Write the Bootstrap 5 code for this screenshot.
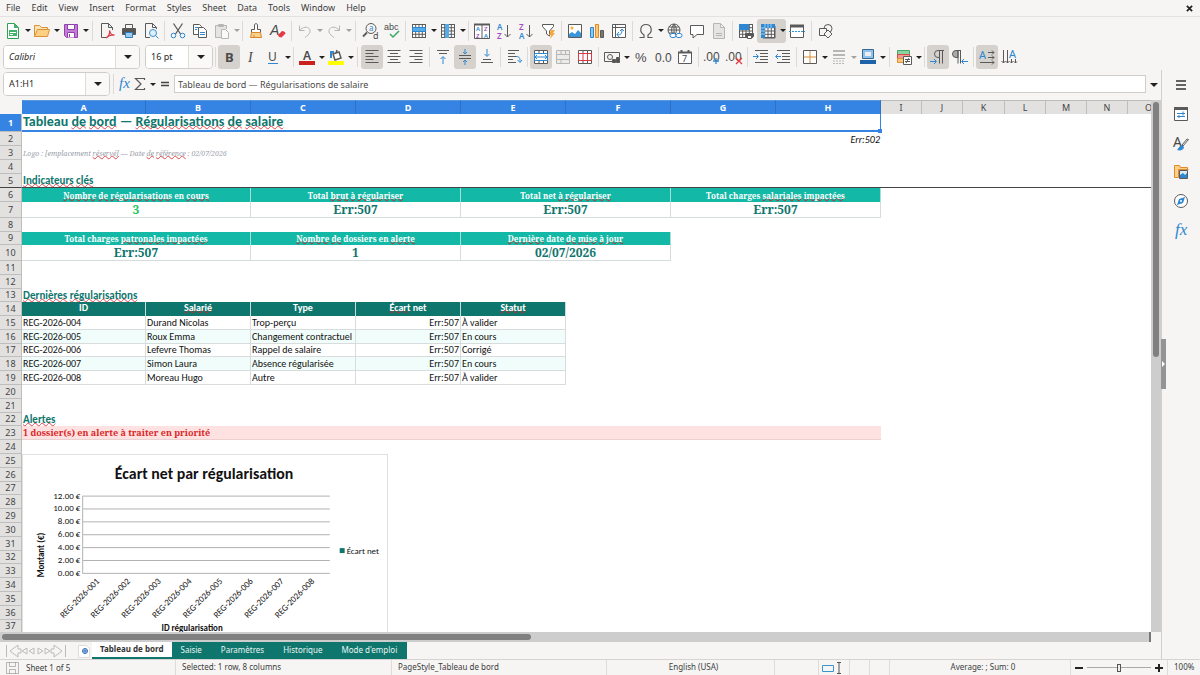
<!DOCTYPE html>
<html lang="fr">
<head>
<meta charset="utf-8">
<meta name="viewport" content="width=device-width, initial-scale=1">
<title>Tableau de bord — Régularisations de salaire</title>
<link href="https://cdn.jsdelivr.net/npm/bootstrap@5.3.0/dist/css/bootstrap.min.css" rel="stylesheet">
<style>
:root{--chrome:#f6f5f4;--line:#dcdad7;--ink:#3d3d3d;--teal:#0f766e;--mint:#14b8a6;--sel:#3584e4}
body{font-family:"Noto Sans",sans-serif;font-size:9px;line-height:16px;color:var(--ink);background:var(--chrome)}
button{font:inherit;color:inherit}
svg{display:block;flex:none}
.ic{width:16px;height:16px;fill:none;stroke:#5a5a5a;stroke-width:1;overflow:visible}
.ic text{stroke:none;fill:#4a4a4a}
.menubar{height:17px;padding-left:6px;border-bottom:1px solid #e4e2e0}
.menubar a{color:var(--ink);text-decoration:none;margin-right:11px}
.toolrow{height:27px;padding-left:2px}
.format-row{height:26px;padding-left:3px}
.tb{width:22px;height:24px;padding:0;border:0;background:none;border-radius:3px;display:flex;align-items:center;justify-content:center;flex:none}
.tb.on,.splitbtn.on{background:#d5d1cd}
.splitbtn{display:flex;border-radius:3px}
.dd{width:7px;height:24px;padding:0;border:0;background:none;display:flex;align-items:center;justify-content:center;flex:none}
.dd::before,.combo button::before,.expand::before{content:"";border:3px solid transparent;border-top:3px solid #222;border-bottom:0}
.off{opacity:.4}
.sep{width:5px;height:20px;flex:none;background:linear-gradient(var(--line),var(--line)) center/1px 100% no-repeat}
.sep-wide{width:7px}
.combo{height:24px;border:1px solid #cfccc9;border-radius:4px;background:#fff;overflow:hidden}
.combo input{border:0;padding:0 5px;min-width:0;flex:1;color:#2a2a2a;outline:0}
.combo button{width:24px;border:0;border-left:1px solid #dedbd8;background:#faf9f8;padding:0;display:flex;align-items:center;justify-content:center}
.combo button::before,.expand::before{border-width:4px 4px 0}
.font-box{width:137px;margin-right:5px}.size-box{width:68px}.name-box{width:107px}
.formula{height:30px;padding-left:3px;padding-bottom:2px}
.formula-input{height:18px;border:1px solid #cfccc9;background:#fff;padding:0 3px;color:#4a4a4a;min-width:0;outline:0}
.expand{width:15px;border:0;background:none;padding:0}
.expand::before{display:inline-block}
.side{width:39px;border-left:1px solid #d2d0ce}
.side .tb{height:29px}
.grip{left:-1px;top:269px;width:5px;height:50px;background:#949494}
.grip::before{content:"";position:absolute;top:22px;left:1px;border:3px solid transparent;border-left-color:#fff;border-right:0}
/* sheet */
.sheet{background:#fff}
.cells{table-layout:fixed;width:1170px;border-collapse:separate;border-spacing:0;font-family:Carlito,Lato,sans-serif;font-size:10px;line-height:12px;color:#111}
.cells td,.cells th{padding:0 1px;white-space:nowrap;font-weight:400;vertical-align:bottom}
.cells thead th{height:14px;background:#e2e1e0;border-top:1px solid #bbb;border-right:1px solid #bebebe;text-align:center;font-family:"Noto Sans",sans-serif;color:#444;vertical-align:middle;font-size:9px;line-height:13px}
.cells thead th.picked{background:var(--sel);color:#fff;font-weight:700;border-right-color:#2b72c8;border-top-color:#5b97dd}
.cells thead th:first-child{background:var(--chrome);border-color:var(--chrome)}
.cells tbody th{background:#e2e1e0;border-bottom:1px solid #bebebe;border-right:1px solid #bebebe;text-align:center;font-family:"Noto Sans",sans-serif;font-size:9px;color:#444;vertical-align:middle;line-height:12px}
.cells tr{height:14px}
.cells tr.r13{height:13px}.cells tr.r16{height:16px}.cells tr.r18{height:18px}
.cells tbody tr.r18 th{background:var(--sel);color:#fff;font-weight:700}
.frozen td,.frozen th:first-child{border-bottom:1px solid #444!important}
.cells .title{font-size:14px;line-height:16px;font-weight:700;color:var(--teal);border:1px solid var(--sel);border-width:0 1px 2px 0;vertical-align:top;position:relative}
.handle{right:-2px;bottom:-3px;width:4px;height:4px;background:var(--sel)}
.cells .section{color:var(--teal);font-weight:700;font-size:11px}
.serif,.kpi td,.cells .kval td,.cells .alert-cell{font-family:"Noto Serif","DejaVu Serif Condensed","DejaVu Serif",serif}
.note{color:#9aa0aa;font-style:italic;font-size:7px}
.cells .kpi .k{background:var(--mint);color:#fff;font-weight:700;text-align:center;border-right:1px solid #a8ded8;font-size:8px}
.cells .kval .k{color:var(--teal);font-weight:700;text-align:center;border:1px solid #d4dcdc;border-width:0 1px 1px 0;font-size:12px;line-height:14px}
.cells .kval .good{color:#22c55e}
.cells .heads .h{background:var(--teal);color:#fff;font-weight:700;text-align:center;border-right:1px solid #c6dedb;vertical-align:top}
.rec td:not(:last-child){border:1px solid #d8dcdc;border-width:0 1px 1px 0}
.rec.alt td:not(:last-child){background:#f0fdfa}
.cells .alert-cell{background:#fee2e2;color:#dc2626;font-weight:700;font-size:9px;border-bottom:1px solid #ecd0d0}
.sp{text-decoration:underline wavy #e5484d 1px;text-underline-offset:-1px;text-decoration-skip-ink:none}
.kpi .sp,.heads .sp{text-decoration-color:#c62828;text-underline-offset:-2px}
.chart{left:0;top:0;width:366px;height:210px;background:#fff;border:1px solid #e0e0e0;z-index:1}
.chart text{font-family:Carlito,Lato,sans-serif;font-size:9px;fill:#111}
.chart .chart-title{font-size:16px;font-weight:700}
.vbar{width:10px;background:#cdcdcd}
.vbar div{width:6px;height:48%;margin:2px auto 0;background:#808080;border-radius:3px}
.hbar{height:10px;background:#cdcdcd;margin-right:10px;border-right:2px solid #777}
.hbar div{width:46%;height:6px;background:#808080;border-radius:3px;margin-left:2px}
.tabsrow{height:17px;font-size:8px}
.tabsrow nav a{color:#e8f5f3;background:var(--teal);text-decoration:none;padding:0 9px;line-height:16px;border-right:1px solid var(--teal)}
.tabsrow nav a.cur{background:#fff;color:#333;font-weight:700;padding:0 8px;border:0;border-bottom:2px solid var(--teal);line-height:14px}
.navs{width:78px;padding-left:5px;opacity:.4}
.status{height:16px;border-top:1px solid #d6d4d2;font-size:8px;line-height:14px}
.status>div{border-right:1px solid #dedcda;white-space:nowrap;overflow:hidden;text-indent:6px}
.status>div:last-child{border:0}
.zoombar{appearance:none;height:14px;min-width:0;flex:1;background:linear-gradient(#aaa,#aaa) center/100% 1px no-repeat}
.zoombar::-webkit-slider-thumb{appearance:none;width:4px;height:8px;border:1px solid #555;background:#eee}
</style>
</head>
<body class="vh-100 d-flex flex-column overflow-hidden">
<svg width="0" height="0" class="position-absolute">
<defs>
<symbol id="grid" viewBox="0 0 16 16"><path d="M1.500 1.500h13v13h-13zM1.500 4.700h13M1.500 8h13M1.500 11.300h13M4.700 1.500v13M8 1.500v13M11.300 1.500v13"/></symbol>
<symbol id="alignl" viewBox="0 0 16 16"><path d="M1.500 1.500h13M1.500 4.500h8M1.500 7.500h13M1.500 10.500h8M1.500 13.500h13"/></symbol>
</defs></svg>

<header class="flex-shrink-0">
<nav class="menubar d-flex align-items-center">
<a href="#">File</a><a href="#">Edit</a><a href="#">View</a><a href="#">Insert</a><a href="#">Format</a><a href="#">Styles</a><a href="#">Sheet</a><a href="#">Data</a><a href="#">Tools</a><a href="#">Window</a><a href="#">Help</a>
<button class="tb ms-auto" aria-label="Close"><svg width="7" height="7" viewBox="0 0 8 8" stroke="#222" stroke-width="2"><path d="M1 1l6 6M7 1L1 7"/></svg></button>
</nav>
<div class="toolrow d-flex align-items-center" role="toolbar" aria-label="Standard">
<button class="tb" aria-label="New"><svg class="ic" viewBox="0 0 16 16"><path stroke="#2f9e57" fill="#fff" d="M2.500.5h7l4 4v11h-11z"/><path fill="#43b26a" stroke="none" d="M9 0l5 5H9zM4 7h8v6H4z"/><path stroke="#fff" d="M5 9.500h6M5 11.500h3"/></svg></button><button class="dd" aria-label="Templates"></button>
<button class="tb" aria-label="Open"><svg class="ic" viewBox="0 0 16 16"><path stroke="#d9933a" fill="#fce3b3" d="M.5 13.500v-11h5l2 2h6v3"/><path stroke="#d9933a" fill="#fccf83" d="M.5 13.500l3-7h12l-2 7z"/></svg></button><button class="dd" aria-label="Recent"></button>
<button class="tb" aria-label="Save"><svg class="ic" viewBox="0 0 16 16"><path stroke="#9340ac" fill="#c27dd6" d="M1.500 1.500h13v13h-11l-2-2z"/><path stroke="#9340ac" fill="#fff" d="M4.500 1.500h7v5h-7zM4.500 14.500v-5h7v5"/><path stroke="#9340ac" d="M6.500 11v3"/></svg></button><button class="dd" aria-label="Save as"></button>
<span class="sep sep-wide"></span>
<button class="tb" aria-label="Export PDF"><svg class="ic" viewBox="0 0 16 16"><path d="M13.500 7V4.500l-4-4h-7v14H8M9.500.5v4h4"/><path stroke="#dc3b45" stroke-width="1.200" d="M7 15c3-2 4-5 3.500-7.500 1 4 3 5 5 4.500-3-.5-6 .5-8.500 3"/></svg></button>
<button class="tb" aria-label="Print"><svg class="ic" viewBox="0 0 16 16"><path d="M4.500 5V1.500h7V5"/><path fill="#555" d="M1.500 5.500h13v6h-13z"/><path fill="#9dcbf0" stroke="#2a7fc0" d="M4.500 9.500h7v5h-7z"/></svg></button>
<button class="tb" aria-label="Preview"><svg class="ic" viewBox="0 0 16 16"><path d="M13.500 6V4.500l-4-4h-7v14H7M9.500.5v4h4"/><circle cx="10" cy="10" r="3.500" stroke="#3a8fcf" fill="#dff0fd"/><path stroke="#3a8fcf" d="M12.500 12.500l3 3"/></svg></button>
<span class="sep"></span>
<button class="tb" aria-label="Cut"><svg class="ic" viewBox="0 0 16 16"><path stroke-width="1.300" d="M3.500.5l7 10.500M12.500.5L5.500 11"/><circle cx="3.500" cy="12.500" r="2.300" stroke="#2e87d0"/><circle cx="12.500" cy="12.500" r="2.300" stroke="#2e87d0"/></svg></button>
<button class="tb" aria-label="Copy"><svg class="ic" viewBox="0 0 16 16"><path fill="#fff" d="M1.500 1.500h6l2 2v8h-8z"/><path fill="#fff" d="M6.500 4.500h5l3 3v7h-8z"/><path stroke="#2e87d0" d="M3 4.500h3M3 6.500h2M8 9.500h5M8 11.500h5"/></svg></button>
<button class="tb off" aria-label="Paste"><svg class="ic" viewBox="0 0 16 16"><path fill="#ccc" d="M7 14.500H1.500v-12h11V6M4.500 3.500v-2h5v2z"/><path fill="#fff" d="M7.500 6.500h4l3 3v6h-7z"/></svg></button><button class="dd off" aria-label="Paste special"></button>
<span class="sep"></span>
<button class="tb" aria-label="Clone"><svg class="ic" viewBox="0 0 16 16"><path d="M6.500 6.500v-5q1.500-2 3 0v5h3v3h-9v-3z" fill="#fff"/><path fill="#fbd08b" stroke="#d9872a" d="M3.500 9.500h9l1 5h-11z"/><path stroke="#d9872a" d="M6 14v-2"/></svg></button>
<button class="tb" aria-label="Clear formatting"><svg class="ic" viewBox="0 0 16 16"><text x="0" y="12" font-size="14" font-style="italic" font-family="Liberation Sans">A</text><path d="M8 12l4-4q3 0 3.500 2.500l-4 4q-3 0-3.500-2.500z" fill="#e63946" stroke="none"/></svg></button>
<span class="sep"></span>
<button class="tb off" aria-label="Undo"><svg class="ic" viewBox="0 0 16 16"><path d="M2.500 2.500v5h5M2.500 7.500C7 2 14 4 13 9c-.5 2-3 4-5 5.500"/></svg></button><button class="dd off" aria-label="Undo list"></button>
<button class="tb off" aria-label="Redo"><svg class="ic" viewBox="0 0 16 16"><path d="M13.500 2.500v5h-5M13.500 7.500C9 2 2 4 3 9c.5 2 3 4 5 5.500"/></svg></button><button class="dd off" aria-label="Redo list"></button>
<span class="sep sep-wide"></span>
<button class="tb" aria-label="Find"><svg class="ic" viewBox="0 0 16 16"><circle cx="9" cy="5.500" r="5"/><path stroke-width="1.800" d="M5 9.500l-4 4"/><text x="7" y="8" font-size="8" style="fill:#2e87d0">a</text><text x="11" y="16" font-size="9">d</text></svg></button>
<button class="tb" aria-label="Spelling"><svg class="ic" viewBox="0 0 16 16"><text x="0" y="7" font-size="9" font-family="Liberation Sans">abc</text><path stroke="#36a865" stroke-width="1.500" d="M6 11l3 3 6-6"/></svg></button>
<span class="sep"></span>
<button class="tb" aria-label="Row"><svg class="ic" viewBox="0 0 16 16"><path fill="#fff" d="M1.500 1.500h13v13h-13z"/><use href="#grid"/><path fill="#56ace8" stroke="#2e87d0" d="M1.500 4.500h13v4h-13z"/></svg></button><button class="dd" aria-label="Row menu"></button>
<button class="tb" aria-label="Column"><svg class="ic" viewBox="0 0 16 16"><path fill="#fff" d="M1.500 1.500h13v13h-13z"/><use href="#grid"/><path fill="#56ace8" stroke="none" d="M5 1h4v14H5z"/></svg></button><button class="dd" aria-label="Column menu"></button>
<span class="sep"></span>
<button class="tb" aria-label="Sort"><svg class="ic" viewBox="0 0 16 16"><path fill="#fff" d="M.5 1.500h15v14H.5zM8 1v14"/><path stroke-width="2" d="M0 1.500h16"/><g font-size="6" font-weight="600"><text x="2" y="8" style="fill:#2e87d0">A</text><text x="2" y="15" style="fill:#a64cc0">Z</text><text x="10" y="8" style="fill:#a64cc0">Z</text><text x="10" y="15" style="fill:#2e87d0">A</text></g></svg></button>
<button class="tb" aria-label="Sort ascending"><svg class="ic" viewBox="0 0 16 16"><g font-size="8" font-weight="600"><text x="1" y="7" style="fill:#2e87d0">A</text><text x="1" y="16" style="fill:#a64cc0">Z</text></g><path d="M11.500 2v12M8.500 11l3 3 3-3"/></svg></button>
<button class="tb" aria-label="Sort descending"><svg class="ic" viewBox="0 0 16 16"><g font-size="8" font-weight="600"><text x="1" y="7" style="fill:#a64cc0">Z</text><text x="1" y="16" style="fill:#2e87d0">A</text></g><path d="M11.500 2v12M8.500 11l3 3 3-3"/></svg></button>
<button class="tb" aria-label="Autofilter"><svg class="ic" viewBox="0 0 16 16"><path fill="#fff" d="M2.500 1.500h11v2L9.500 8v5l-3-2V8l-4-4.500z"/><path fill="#f5a83c" stroke="none" d="M11 7h4l-2 3h2l-5 6 1-4H9z"/></svg></button>
<span class="sep"></span>
<button class="tb" aria-label="Image"><svg class="ic" viewBox="0 0 16 16"><path fill="#fff" d="M1.500 1.500h13v13h-13z"/><path fill="#3a96d8" stroke="none" d="M2 14v-3l3-2 3 2 3-4 3 3v4z"/><circle cx="5" cy="5" r="1.500" fill="#f5b03c" stroke="none"/></svg></button>
<button class="tb" aria-label="Chart"><svg class="ic" viewBox="0 0 16 16"><path fill="#8ec8f2" stroke="#2e87d0" d="M1.500 4.500h3v10h-3z"/><path fill="#fbc878" stroke="#e08a20" d="M6.500 1.500h3v13h-3z"/><path fill="#777" d="M11.500 7.500h3v7h-3z"/></svg></button>
<button class="tb" aria-label="Pivot"><svg class="ic" viewBox="0 0 16 16"><path fill="#fff" d="M1.500 1.500h13v13h-13zM1.500 4.500h13M4.500 1.500v13"/><path stroke="#2e87d0" d="M6 11.500c4 1 5-1 5-5M9 8l2-2 2 2M8 9l-2 2.500L8 14"/></svg></button>
<span class="sep"></span>
<button class="tb" aria-label="Symbol"><svg class="ic" viewBox="0 0 16 16"><path stroke-width="1.200" d="M1.500 14.500h4.500V12C1 9 2 1.500 8 1.500S15 9 10 12v2.500h4.500"/></svg></button><button class="dd" aria-label="Symbols"></button>
<button class="tb" aria-label="Hyperlink"><svg class="ic" viewBox="0 0 16 16"><circle cx="7" cy="7" r="6"/><path d="M1 7h12M7 1v12M2 4h10M2 10h6M7 1q-5 6 0 12M7 1q5 6 0 12"/><rect x="3" y="10.500" width="6" height="4" rx="2" stroke="#2e87d0" fill="#fff"/><rect x="9" y="10.500" width="6" height="4" rx="2" stroke="#2e87d0" fill="#fff"/></svg></button>
<button class="tb" aria-label="Comment"><svg class="ic" viewBox="0 0 16 16"><path fill="#fff" d="M1.500 2.500h13v9H8l-4 3.500v-3.500H1.500z"/></svg></button>
<button class="tb off" aria-label="Headers"><svg class="ic" viewBox="0 0 16 16"><path fill="#ccc" d="M2.500.5h7l4 4v11h-11zM9.500.5v4h4M5 10.500h6M5 12.500h6"/></svg></button>
<span class="sep"></span>
<button class="tb" aria-label="Print area"><svg class="ic" viewBox="0 0 16 16"><path fill="#fff" d="M1.500 1.500h13v13h-13z"/><use href="#grid"/><path fill="#2e87d0" stroke="none" d="M1 1h10v6H1z"/><path fill="#555" d="M7.500 10.500h8v3h-8z"/><path fill="#fff" d="M9.500 12.500h4v3h-4z"/></svg></button>
<span class="splitbtn on"><button class="tb" aria-label="Freeze"><svg class="ic" viewBox="0 0 16 16"><path fill="#fff" d="M3 3h12v12H3z"/><use href="#grid"/><path fill="#2e87d0" stroke="none" d="M1 1h14v4H5v10H1z"/><path stroke="#9ad0f5" d="M1 5h4V1M5 8H1M1 11h4M8 1v4M11 1v4"/></svg></button><button class="dd" aria-label="Freeze menu"></button></span>
<button class="tb" aria-label="Split"><svg class="ic" viewBox="0 0 16 16"><path fill="#fff" d="M1.500 2.500h13v12h-13z"/><path stroke-width="3" d="M1 3h14"/><path stroke="#2e97d8" stroke-dasharray="2 1" d="M0 8.500h16"/></svg></button>
<span class="sep sep-wide"></span>
<button class="tb" aria-label="Draw"><svg class="ic" viewBox="0 0 16 16"><circle cx="10" cy="5.500" r="4"/><path fill="#f6f5f4" d="M1.500 5.500h7v7h-7z"/><path fill="#f6f5f4" d="M10 7l4 4-4 4-4-4z"/></svg></button>
</div>
<div class="format-row d-flex align-items-center" role="toolbar" aria-label="Formatting">
<div class="combo font-box d-flex flex-shrink-0"><input class="fst-italic" value="Calibri" aria-label="Font"><button aria-label="Font list"></button></div>
<div class="combo size-box d-flex flex-shrink-0"><input value="16 pt" aria-label="Size"><button aria-label="Size list"></button></div>
<span class="sep"></span>
<button class="tb on" aria-label="Bold"><svg class="ic" viewBox="0 0 16 16"><text x="4" y="13" font-size="13" font-weight="700">B</text></svg></button>
<button class="tb" aria-label="Italic"><svg class="ic" viewBox="0 0 16 16"><text x="5" y="13" font-size="14" font-style="italic" font-family="Liberation Serif">I</text></svg></button>
<button class="tb" aria-label="Underline"><svg class="ic" viewBox="0 0 16 16"><text x="3" y="12" font-size="12">U</text><path stroke="#2e87d0" d="M3 14.500h10"/></svg></button><button class="dd" aria-label="Underline styles"></button>
<span class="sep"></span>
<button class="tb" aria-label="Font colour"><svg class="ic" viewBox="0 0 16 16"><text x="4" y="11" font-size="12" font-weight="600">A</text><path stroke="#c9211e" stroke-width="4" d="M0 14h16"/></svg></button><button class="dd" aria-label="Colours"></button>
<button class="tb" aria-label="Highlighting"><svg class="ic" viewBox="0 0 16 16"><path stroke-width="1.500" fill="#fff" d="M5 5l6-2 2 6-6 2zM8 4l1-3"/><path stroke="#2e87d0" stroke-width="2" d="M6 3H3v6"/><path stroke="#ff0" stroke-width="4" d="M0 14h16"/></svg></button><button class="dd" aria-label="Highlights"></button>
<span class="sep sep-wide"></span>
<button class="tb on" aria-label="Left"><svg class="ic"><use href="#alignl"/></svg></button>
<button class="tb" aria-label="Centre"><svg class="ic" viewBox="0 0 16 16"><path d="M1.500 1.500h13M4 4.500h8M1.500 7.500h13M4 10.500h8M1.500 13.500h13"/></svg></button>
<button class="tb" aria-label="Right"><svg class="ic" viewBox="0 0 16 16"><path d="M1.500 1.500h13M6.500 4.500h8M1.500 7.500h13M6.500 10.500h8M1.500 13.500h13"/></svg></button>
<span class="sep"></span>
<button class="tb" aria-label="Top"><svg class="ic" viewBox="0 0 16 16"><path d="M2 1.500h12M4 4.500h8"/><path stroke="#2e87d0" d="M8 15V8M5.500 10L8 7.500l2.500 2.500"/></svg></button>
<button class="tb on" aria-label="Middle"><svg class="ic" viewBox="0 0 16 16"><path d="M2 6.500h12M2 9.500h12"/><path stroke="#2e87d0" d="M8 0v5M6 3l2 2 2-2M8 16v-5M6 13l2-2 2 2"/></svg></button>
<button class="tb" aria-label="Bottom"><svg class="ic" viewBox="0 0 16 16"><path d="M4 10.500h8M2 13.500h12"/><path stroke="#2e87d0" d="M8 0v7M5.500 5L8 7.500 10.500 5"/></svg></button>
<span class="sep"></span>
<button class="tb" aria-label="Wrap"><svg class="ic" viewBox="0 0 16 16"><path d="M2 1.500h11M2 4.500h7M2 7.500h9M2 10.500h5M2 13.500h8"/><path stroke="#2e87d0" d="M10 7.500c4 0 4 2 4 5M11.500 11l2.500 2.500L16 11"/></svg></button>
<span class="sep"></span>
<button class="tb on" aria-label="Merge and centre"><svg class="ic" viewBox="0 0 16 16"><path fill="#fff" d="M1.500 1.500h13v13h-13zM1.500 4.500h13M1.500 11.500h13M6 1.500v3M10.500 1.500v3M6 11.500v3M10.500 11.500v3"/><path stroke="#2e87d0" d="M2 8h12M4 6L2 8l2 2M12 6l2 2-2 2M1.500 4.500h13v7h-13z"/></svg></button>
<button class="tb off" aria-label="Merge"><svg class="ic" viewBox="0 0 16 16"><path fill="#ddd" d="M1.500 1.500h13v13h-13zM1.500 5.500h13M1.500 10.500h13M6 1.500v4M10.500 1.500v4M6 10.500v4"/></svg></button>
<button class="tb" aria-label="Split cells"><svg class="ic" viewBox="0 0 16 16"><path fill="#fff" d="M1.500 1.500h13v13h-13zM6 1.500v3M10.500 1.500v3M6 11.500v3M10.500 11.500v3"/><path stroke="#dc3b45" d="M1.500 4.500h13v7h-13zM6 4.500v7M10.500 4.500v7"/></svg></button>
<span class="sep"></span>
<button class="tb" aria-label="Currency"><svg class="ic" viewBox="0 0 16 16"><path d="M13 12.500H.5v-9h15V8"/><circle cx="6" cy="8" r="2.500"/><path fill="#555" d="M8.500 10.500h3v3h-3zM12.500 8.500h3v5h-3z"/></svg></button><button class="dd" aria-label="Currencies"></button>
<button class="tb" aria-label="Percent"><svg class="ic" viewBox="0 0 16 16"><text x="2" y="13" font-size="13" font-family="Liberation Sans">%</text></svg></button>
<button class="tb" aria-label="Number"><svg class="ic" viewBox="0 0 16 16"><text x="0" y="13" font-size="12" font-family="Liberation Sans">0.0</text></svg></button>
<button class="tb" aria-label="Date"><svg class="ic" viewBox="0 0 16 16"><path fill="#fff" d="M1.500 3.500h13v11h-13z"/><path stroke-width="2" d="M1 3.500h14M4.500 1v3M11.500 1v3"/><text x="5" y="13" font-size="9">7</text></svg></button>
<span class="sep"></span>
<button class="tb" aria-label="Add decimal"><svg class="ic" viewBox="0 0 16 16"><text x="-1" y="12" font-size="12" font-family="Liberation Sans">.00</text><path stroke="#2e87d0" stroke-width="1.300" d="M12 9v6M9 12h6"/></svg></button>
<button class="tb" aria-label="Remove decimal"><svg class="ic" viewBox="0 0 16 16"><text x="-1" y="12" font-size="12" font-family="Liberation Sans">.00</text><path stroke="#dc3b45" stroke-width="1.300" d="M10 9l6 6M16 9l-6 6"/></svg></button>
<span class="sep"></span>
<button class="tb" aria-label="Indent"><svg class="ic" viewBox="0 0 16 16"><path d="M2 1.500h13M7 4.500h8M7 7.500h8M7 10.500h8M2 13.500h13"/><path stroke="#2e87d0" d="M0 7.500h5M3 5l2.500 2.500L3 10"/></svg></button>
<button class="tb" aria-label="Outdent"><svg class="ic" viewBox="0 0 16 16"><path d="M2 1.500h13M7 4.500h8M7 7.500h8M7 10.500h8M2 13.500h13"/><path stroke="#2e87d0" d="M6 7.500H1M3 5L.5 7.500 3 10"/></svg></button>
<span class="sep"></span>
<button class="tb" aria-label="Borders"><svg class="ic" viewBox="0 0 16 16"><path fill="#fff" d="M1.500 1.500h13v13h-13z"/><path stroke="#d98a35" d="M8 2v12M2 8h12"/></svg></button><button class="dd" aria-label="Border list"></button>
<button class="tb off" aria-label="Border style"><svg class="ic" viewBox="0 0 16 16"><path stroke-width="2" d="M2 2h12M2 6h12"/><path d="M2 9.500h12"/><path stroke-dasharray="2 1" d="M2 12h12M2 14.500h12"/></svg></button><button class="dd off" aria-label="Border styles"></button>
<button class="tb" aria-label="Border colour"><svg class="ic" viewBox="0 0 16 16"><path fill="#8dc3ee" stroke="#36688f" d="M2.500.5h11v9h-11z"/><path fill="#eee" stroke="none" d="M5 3h6v4H5z"/><path stroke="#1e62a8" stroke-width="4" d="M0 13h16"/></svg></button><button class="dd" aria-label="Border colours"></button>
<span class="sep sep-wide"></span>
<button class="tb" aria-label="Conditional"><svg class="ic" viewBox="0 0 16 16"><path fill="#8bd3a2" stroke="#45a867" d="M1.500 1.500h12v4h-12z"/><path fill="#f39a93" stroke="#d24b45" d="M1.500 5.500h12v4h-12z"/><path fill="#fbc878" stroke="#d9933a" d="M1.500 9.500h6v4h-6z"/><path fill="#fff" d="M7.500 7.500h8v8h-8zM9 10.500h5M9 12.500h5M13 9l-3 5"/></svg></button><button class="dd" aria-label="Conditional menu"></button>
<span class="sep"></span>
<button class="tb on" aria-label="Left to right"><svg class="ic" viewBox="0 0 16 16"><path d="M14 1.500H8a3 3 0 000 7h1.500M9.500 1.500v13M12.500 1.500v13"/><path stroke="#2e87d0" d="M0 12.500h6M4 10l2.500 2.500L4 15"/></svg></button>
<button class="tb" aria-label="Right to left"><svg class="ic" viewBox="0 0 16 16"><path fill="#aaa" d="M6 1.500H4a3 3 0 000 7h2z"/><path d="M9 1.500H5M6 1.500v13M8.500 1.500v13"/><path stroke="#2e87d0" d="M16 12.500h-6M12 10l-2.500 2.500L12 15"/></svg></button>
<span class="sep"></span>
<button class="tb on" aria-label="Horizontal text"><svg class="ic" viewBox="0 0 16 16"><text x="0" y="10" font-size="11" style="fill:#2e87d0">A</text><path d="M9 3.500h6M13 1.500l2 2-2 2M9 8.500h6M13 6.500l2 2-2 2M1 13.500h14M13 11.500l2 2-2 2"/></svg></button>
<button class="tb" aria-label="Vertical text"><svg class="ic" viewBox="0 0 16 16"><text x="8" y="9" font-size="11" style="fill:#2e87d0">A</text><path d="M2.500 1v13M.5 12l2 2 2-2M6.500 1v13M4.500 12l2 2 2-2M10.500 10v4M9 12.500l1.500 1.500 2-2M14.500 10v4M13 12.500l1.500 1.500 1.500-1.500"/></svg></button>
</div>
</header>

<main class="d-flex flex-fill overflow-hidden">
<div class="d-flex flex-column flex-fill overflow-hidden">
<div class="formula d-flex align-items-center flex-shrink-0">
<div class="combo name-box d-flex flex-shrink-0"><input value="A1:H1" aria-label="Name box"><button aria-label="Names"></button></div>
<span class="sep sep-wide"></span>
<button class="tb w-auto" aria-label="Function wizard"><svg class="ic" viewBox="0 0 16 16"><text x="2" y="12" font-size="15" font-style="italic" font-family="Liberation Serif" style="fill:#2e87d0">fx</text></svg></button>
<button class="tb w-auto" aria-label="Sum"><svg class="ic" viewBox="0 0 16 16"><path stroke-width="1.200" d="M11.500 4V2.500h-9L8 8l-5.500 5.500h9V12"/></svg></button><button class="dd" aria-label="Sum menu"></button>
<button class="tb w-auto mx-1" aria-label="Formula"><svg width="10" height="16" viewBox="0 0 10 16" stroke="#444" stroke-width="1.500"><path d="M1 6.500h8M1 9.500h8"/></svg></button>
<input class="formula-input flex-fill" value="Tableau de bord — Régularisations de salaire" aria-label="Formula">
<button class="expand" aria-label="Expand"></button>
</div>
<div class="d-flex flex-fill overflow-hidden">
<div class="sheet flex-fill overflow-hidden">
<table class="cells">
<colgroup><col style="width:22px"><col style="width:124px"><col style="width:105px"><col style="width:105px"><col style="width:105px"><col style="width:105px"><col style="width:105px"><col style="width:105px"><col style="width:105px"><col style="width:41px"><col style="width:41px"><col style="width:42px"><col style="width:41px"><col style="width:41px"><col style="width:41px"><col style="width:42px"></colgroup>
<thead><tr><th></th><th class="picked">A</th><th class="picked">B</th><th class="picked">C</th><th class="picked">D</th><th class="picked">E</th><th class="picked">F</th><th class="picked">G</th><th class="picked">H</th><th>I</th><th>J</th><th>K</th><th>L</th><th>M</th><th>N</th><th>O</th></tr></thead>
<tbody>
<tr class="r18"><th>1</th><td colspan="8" class="title">Tableau <span class="sp">de</span> <span class="sp">bord</span> — <span class="sp">Régularisations</span> <span class="sp">de</span> <span class="sp">salaire</span><i class="handle position-absolute"></i></td><td colspan="7"></td></tr>
<tr><th>2</th><td colspan="8" class="text-end fst-italic">Err:502</td><td colspan="7"></td></tr>
<tr><th>3</th><td colspan="15" class="serif note">Logo : [emplacement <span class="sp">réservé]</span> — Date <span class="sp">de</span> <span class="sp">référence</span> : 02/07/2026</td></tr>
<tr><th>4</th><td colspan="15"></td></tr>
<tr class="frozen"><th>5</th><td colspan="15" class="section"><span class="sp">Indicateurs</span> <span class="sp">clés</span></td></tr>
<tr class="kpi"><th>6</th><td colspan="2" class="k"><span class="sp">Nombre</span> <span class="sp">de</span> <span class="sp">régularisations</span> en <span class="sp">cours</span></td><td colspan="2" class="k">Total <span class="sp">brut</span> <span class="sp">à</span> <span class="sp">régulariser</span></td><td colspan="2" class="k">Total net <span class="sp">à</span> <span class="sp">régulariser</span></td><td colspan="2" class="k">Total charges <span class="sp">salariales</span> <span class="sp">impactées</span></td><td colspan="7"></td></tr>
<tr class="kval r16"><th>7</th><td colspan="2" class="k good">3</td><td colspan="2" class="k">Err:507</td><td colspan="2" class="k">Err:507</td><td colspan="2" class="k">Err:507</td><td colspan="7"></td></tr>
<tr><th>8</th><td colspan="15"></td></tr>
<tr class="kpi r13"><th>9</th><td colspan="2" class="k">Total charges <span class="sp">patronales</span> <span class="sp">impactées</span></td><td colspan="2" class="k"><span class="sp">Nombre</span> <span class="sp">de</span> dossiers en <span class="sp">alerte</span></td><td colspan="2" class="k"><span class="sp">Dernière</span> date <span class="sp">de</span> <span class="sp">mise</span> <span class="sp">à</span> <span class="sp">jour</span></td><td colspan="9"></td></tr>
<tr class="kval r16"><th>10</th><td colspan="2" class="k">Err:507</td><td colspan="2" class="k">1</td><td colspan="2" class="k">02/07/2026</td><td colspan="9"></td></tr>
<tr><th>11</th><td colspan="15"></td></tr>
<tr><th>12</th><td colspan="15"></td></tr>
<tr class="r13"><th>13</th><td colspan="15" class="section"><span class="sp">Dernières</span> <span class="sp">régularisations</span></td></tr>
<tr class="heads"><th>14</th><td class="h">ID</td><td class="h"><span class="sp">Salarié</span></td><td class="h">Type</td><td class="h"><span class="sp">Écart</span> net</td><td class="h"><span class="sp">Statut</span></td><td colspan="10"></td></tr>
<tr class="rec"><th>15</th><td>REG-2026-004</td><td>Durand Nicolas</td><td>Trop-perçu</td><td class="text-end">Err:507</td><td>À valider</td><td colspan="10"></td></tr>
<tr class="rec alt"><th>16</th><td>REG-2026-005</td><td>Roux Emma</td><td>Changement contractuel</td><td class="text-end">Err:507</td><td>En cours</td><td colspan="10"></td></tr>
<tr class="rec r13"><th>17</th><td>REG-2026-006</td><td>Lefevre Thomas</td><td>Rappel de salaire</td><td class="text-end">Err:507</td><td>Corrigé</td><td colspan="10"></td></tr>
<tr class="rec alt"><th>18</th><td>REG-2026-007</td><td>Simon Laura</td><td>Absence régularisée</td><td class="text-end">Err:507</td><td>En cours</td><td colspan="10"></td></tr>
<tr class="rec"><th>19</th><td>REG-2026-008</td><td>Moreau Hugo</td><td>Autre</td><td class="text-end">Err:507</td><td>À valider</td><td colspan="10"></td></tr>
<tr><th>20</th><td colspan="15"></td></tr>
<tr><th>21</th><td colspan="15"></td></tr>
<tr class="r13"><th>22</th><td colspan="15" class="section"><span class="sp">Alertes</span></td></tr>
<tr><th>23</th><td colspan="8" class="alert-cell">1 dossier(s) en alerte à traiter en priorité</td><td colspan="7"></td></tr>
<tr><th>24</th><td colspan="15"></td></tr>
<tr><th>25</th><td colspan="15" class="position-relative">
<svg class="chart position-absolute" viewBox="0 0 366 210" role="img" aria-label="Écart net par régularisation">
<text x="182" y="24" text-anchor="middle" class="chart-title">Écart net par régularisation</text>
<path stroke="#b0b0b0" fill="none" d="M60 41.500h249M60 54.500h249M60 67.500h249M60 80.500h249M60 93.500h249M60 106.500h249M60 119.500h249M59.500 41v79"/>
<g text-anchor="end"><text x="57" y="44">12.00 €</text><text x="57" y="57">10.00 €</text><text x="57" y="70">8.00 €</text><text x="57" y="83">6.00 €</text><text x="57" y="96">4.00 €</text><text x="57" y="109">2.00 €</text><text x="57" y="122">0.00 €</text>
<text transform="translate(77 128) rotate(-45)">REG-2026-001</text><text transform="translate(108 128) rotate(-45)">REG-2026-002</text><text transform="translate(139 128) rotate(-45)">REG-2026-003</text><text transform="translate(170 128) rotate(-45)">REG-2026-004</text><text transform="translate(201 128) rotate(-45)">REG-2026-005</text><text transform="translate(232 128) rotate(-45)">REG-2026-006</text><text transform="translate(263 128) rotate(-45)">REG-2026-007</text><text transform="translate(294 128) rotate(-45)">REG-2026-008</text></g>
<text transform="translate(20 101) rotate(-90)" text-anchor="middle" font-weight="700">Montant (€)</text>
<text x="170" y="178" text-anchor="middle" font-weight="700">ID régularisation</text>
<path fill="#0f766e" d="M319 94h5v5h-5z"/><text x="326" y="100">Écart net</text>
</svg></td></tr>
<tr><th>26</th><td colspan="15"></td></tr>
<tr class="r13"><th>27</th><td colspan="15"></td></tr>
<tr><th>28</th><td colspan="15"></td></tr>
<tr><th>29</th><td colspan="15"></td></tr>
<tr><th>30</th><td colspan="15"></td></tr>
<tr><th>31</th><td colspan="15"></td></tr>
<tr class="r13"><th>32</th><td colspan="15"></td></tr>
<tr><th>33</th><td colspan="15"></td></tr>
<tr><th>34</th><td colspan="15"></td></tr>
<tr><th>35</th><td colspan="15"></td></tr>
<tr><th>36</th><td colspan="15"></td></tr>
<tr class="r13"><th>37</th><td colspan="15"></td></tr>
</tbody></table>
</div>
<div class="vbar flex-shrink-0"><div></div></div>
</div>
<div class="hbar flex-shrink-0 d-flex align-items-center"><div></div></div>
<div class="tabsrow d-flex flex-shrink-0">
<div class="navs d-flex align-items-center"><svg width="62" height="14" viewBox="0 0 62 14" fill="none" stroke="#666"><path d="M1.500 1v12M13 1L5 7l8 6V9h3V5h-3zM22 4l-5 3 5 3zM29 4l-5 3 5 3zM33 4l5 3-5 3zM40 4l5 3-5 3zM49 1l8 6-8 6V9h-3V5h3zM60.500 1v12"/></svg></div>
<button class="tb w-auto h-100" aria-label="Add sheet"><svg width="14" height="14" viewBox="0 0 14 14"><path d="M.5 1.500h8l3 3v9H.5z" fill="#fff" stroke="#ddd"/><circle cx="7" cy="7" r="2.500" fill="#fff" stroke="#2b66b8" stroke-width="1"/><path d="M7 5v4M5 7h4" stroke="#2b66b8"/></svg></button>
<nav class="d-flex"><a class="cur" href="#">Tableau de bord</a><a href="#">Saisie</a><a href="#">Paramètres</a><a href="#">Historique</a><a href="#">Mode d'emploi</a></nav>
</div>
</div>
<aside class="side position-relative d-flex flex-column align-items-center flex-shrink-0">
<button class="tb" aria-label="Settings"><svg class="ic" viewBox="0 0 16 16"><path stroke="#333" stroke-width="1.500" d="M3 4h10M3 8h10M3 12h10"/></svg></button>
<button class="tb" aria-label="Properties"><svg class="ic" viewBox="0 0 16 16"><path fill="#fff" d="M1.500 1.500h13v13h-13z"/><path stroke-width="3" d="M1 2.500h14"/><path stroke="#2e87d0" d="M4 7.500h8M10 5.500v4M4 10.500h8M6 9v3"/></svg></button>
<button class="tb" aria-label="Styles"><svg class="ic" viewBox="0 0 16 16"><text x="0" y="12" font-size="14">A</text><path fill="#fff" d="M15.500 4.500L10 11l-1-1 5-6z"/><path fill="#2e87d0" stroke="none" d="M4 15c3 1 7 0 7-3l-2-2c-3 1-3 3-5 5z"/></svg></button>
<button class="tb" aria-label="Gallery"><svg class="ic" viewBox="0 0 16 16"><path stroke="#e08a2c" fill="#fbd08b" d="M1.500 13.500v-12h5l1 2h7v3M1.500 13.500h4v-8h10"/><path fill="#d5ecfc" d="M6.500 6.500h8v8h-8z"/><path fill="#2e87d0" stroke="none" d="M7 14v-3l3-2 2 2 2-2v5z"/></svg></button>
<button class="tb" aria-label="Navigator"><svg class="ic" viewBox="0 0 16 16"><circle cx="8" cy="8" r="6.500" fill="#fff"/><path fill="#2e87d0" stroke="none" d="M12 4l-2 6-6 2 2-6z"/><circle cx="8" cy="8" r="1" fill="#fff" stroke="none"/></svg></button>
<button class="tb" aria-label="Functions"><svg class="ic" viewBox="0 0 16 16"><text x="2" y="13" font-size="17" font-style="italic" font-family="Liberation Serif" style="fill:#2e87d0">fx</text></svg></button>
<div class="grip position-absolute"></div>
</aside>
</main>

<footer class="status d-flex flex-shrink-0">
<div style="flex:171 1 0" class="d-flex align-items-center ps-1"><svg class="ic off" width="14" viewBox="0 0 16 16"><path d="M2.500 2.500h12v11h-12zM5.500 2.500v4h6v-4M5.500 13.500v-4h6v4"/></svg>Sheet 1 of 5</div>
<div style="flex:215 1 0">Selected: 1 row, 8 columns</div>
<div style="flex:214 1 0">PageStyle_Tableau de bord</div>
<div style="flex:167 1 0" class="text-center">English (USA)</div>
<div style="flex:43 1 0"></div>
<div style="flex:30 1 0" class="d-flex align-items-center justify-content-center"><svg width="26" height="14" viewBox="0 0 26 14" fill="none" stroke="#555"><path stroke="#3a96d0" d="M1.500 4.500h11v6h-11z"/><path d="M16 1.500h4M18 2v10M16 12.500h4"/></svg></div>
<div style="flex:19 1 0"></div>
<div style="flex:19 1 0"></div>
<div style="flex:180 1 0" class="text-center">Average: ; Sum: 0</div>
<div style="flex:88 1 0" class="d-flex align-items-center gap-1 px-1"><svg width="8" height="8" stroke="#222" stroke-width="2"><path d="M0 4h8"/></svg><input type="range" class="zoombar" aria-label="Zoom"><svg width="8" height="8" stroke="#222" stroke-width="2"><path d="M0 4h8M4 0v8"/></svg></div>
<div style="flex:32 1 0">100%</div>
</footer>
<script src="https://cdn.jsdelivr.net/npm/bootstrap@5.3.0/dist/js/bootstrap.bundle.min.js"></script>
</body>
</html>
